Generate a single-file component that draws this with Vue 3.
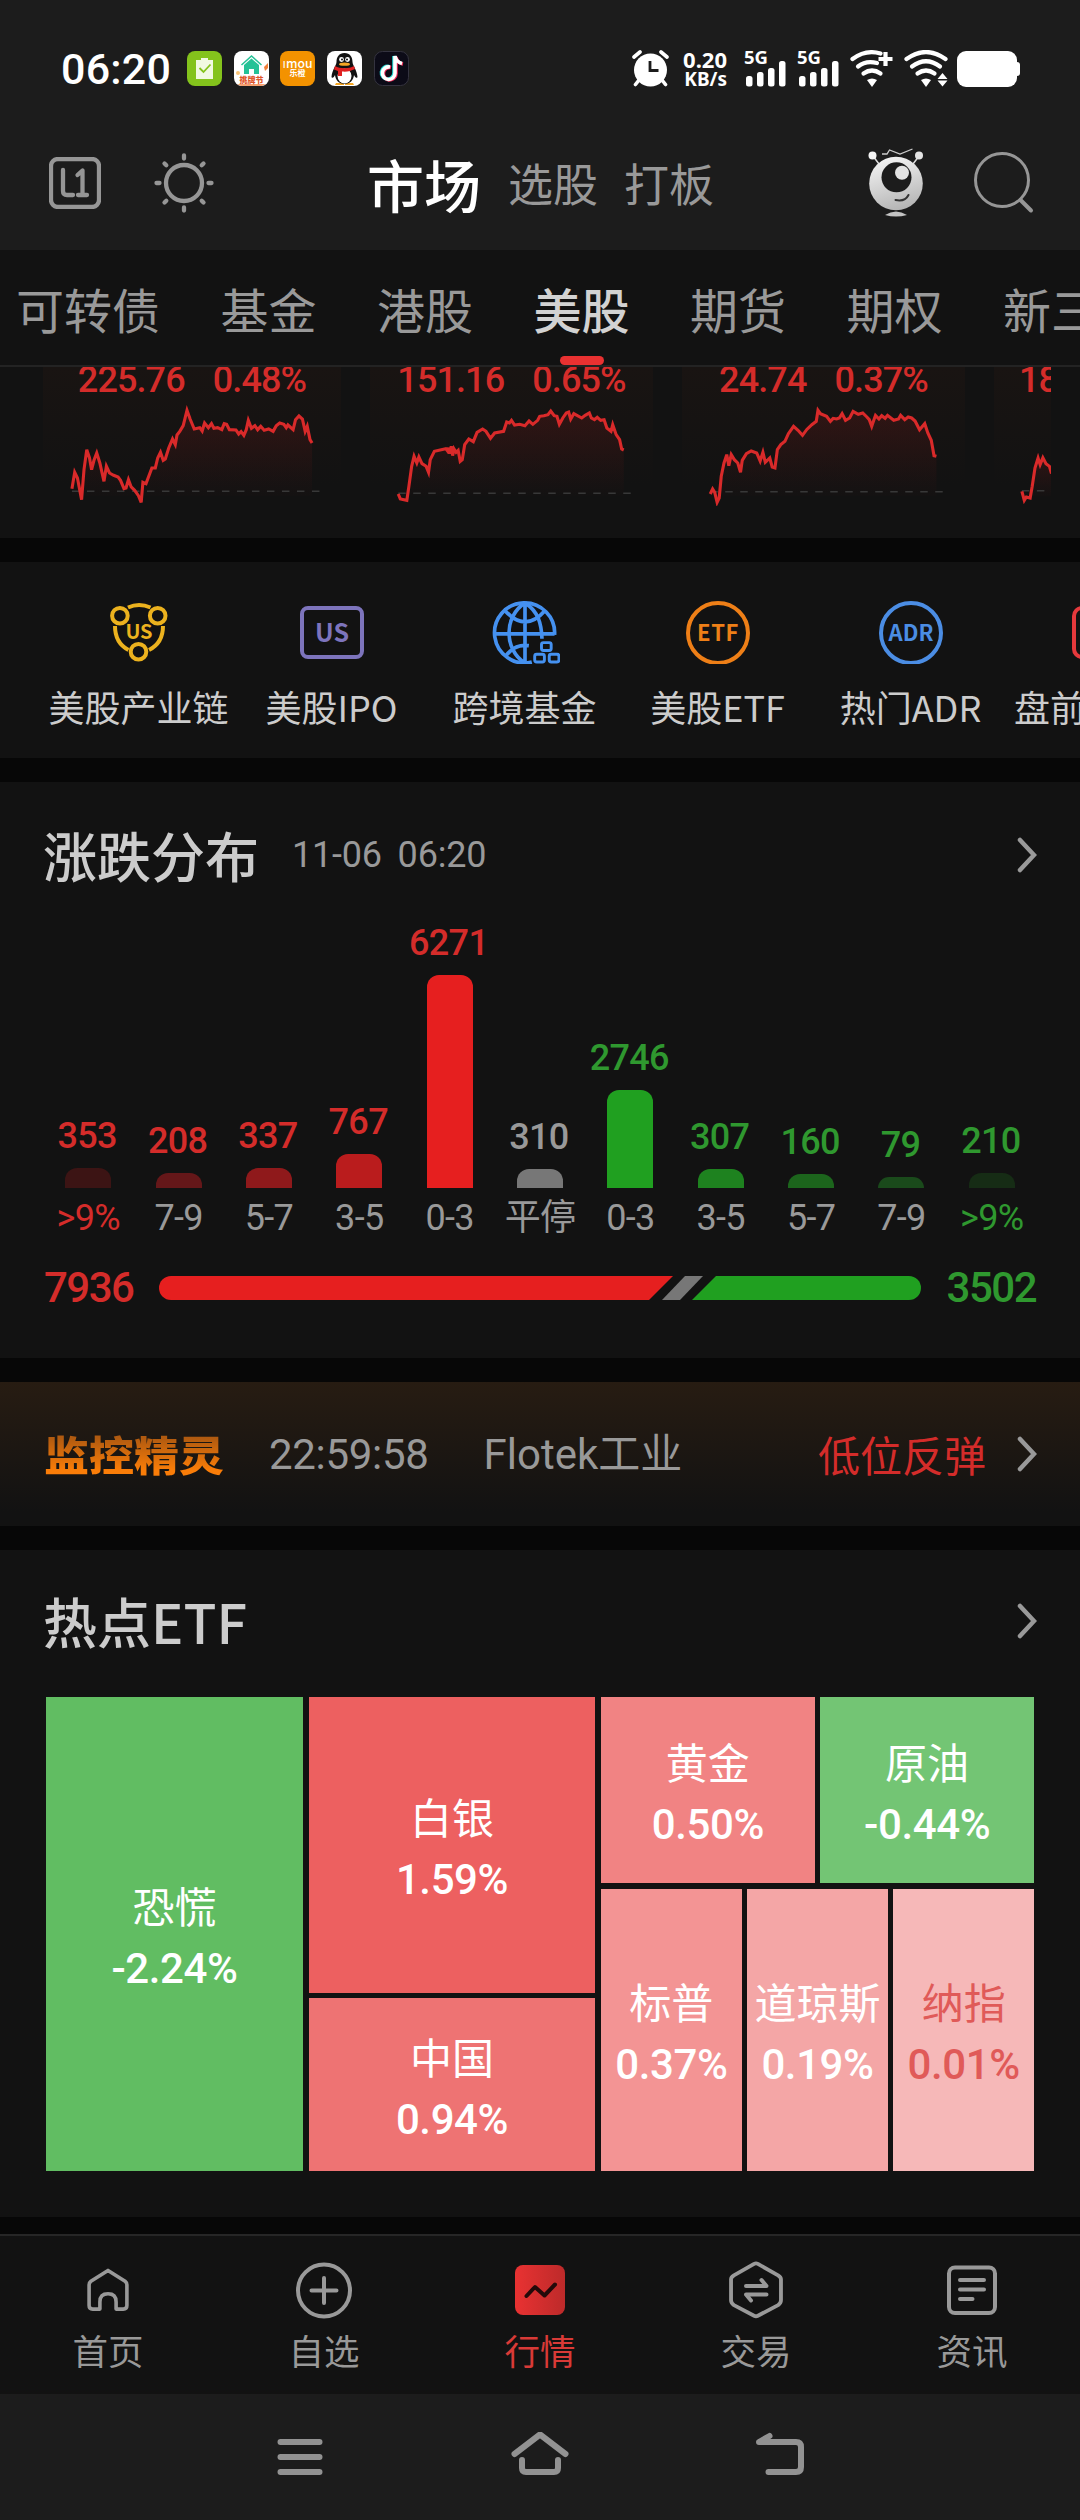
<template>
  <div class="page">
    <!-- Barre d'état du téléphone -->
    <div class="status-bar">
      <span class="clock">06:20</span>
      <div class="notif-icons">
        <svg width="35" height="35" viewBox="0 0 35 35">
          <rect width="35" height="35" rx="8" fill="#84c31c" />
          <path d="M9 9h5V7h7v2h5v19H9z" fill="#f1f9e2" />
          <path d="M12.500 17l4 4 7-7.500" fill="none" stroke="#84c31c" stroke-width="1.800" />
        </svg>
        <svg width="35" height="35" viewBox="0 0 35 35">
          <rect width="35" height="35" rx="8" fill="#fff" />
          <path d="M10 14l7.500-6.500L25 14v9h-5v-5h-5v5h-5z" fill="#25c296" />
          <path d="M7.500 14l10-9 10 9" fill="none" stroke="#25c296" stroke-width="1.500" />
          <path d="M30 16l4-4v5l-3 3z" fill="#f0803a" />
          <circle cx="4" cy="22" r="2" fill="#f9c476" />
          <path d="M3 33h29l-4 2H7z" fill="#f7a070" />
          <text x="17.500" y="32" font-size="8" font-weight="900" fill="#e0562a" text-anchor="middle">挑牌节</text>
        </svg>
        <svg width="35" height="35" viewBox="0 0 35 35">
          <rect width="35" height="35" rx="8" fill="#f39200" />
          <text x="17.500" y="17" font-size="12" font-weight="500" fill="#fff" text-anchor="middle" textLength="30" lengthAdjust="spacingAndGlyphs">ımou</text>
          <text x="17.500" y="25" font-size="8" font-weight="700" fill="#fff" text-anchor="middle">乐橙</text>
        </svg>
        <svg width="35" height="35" viewBox="0 0 35 35">
          <rect width="35" height="35" rx="8" fill="#fff" />
          <path d="M9 32h8v2H8zM18 32h8l1 2h-9z" fill="#f5a623" />
          <path d="M17.500 2c-5.500 0-8 4-8 9 0 3-4.500 8-5 15 1 2 2.500 0 3.500-2 .5 5 4 9 9.500 9s9-4 9.500-9c1 2 2.500 4 3.500 2-.5-7-5-12-5-15 0-5-2.500-9-8-9z" fill="#111" />
          <ellipse cx="17.500" cy="25" rx="7" ry="7.500" fill="#fff" />
          <circle cx="14.500" cy="8.500" r="2.400" fill="#fff" />
          <circle cx="20.500" cy="8.500" r="2.400" fill="#fff" />
          <circle cx="15" cy="8.500" r="1" fill="#111" />
          <circle cx="20" cy="8.500" r="1" fill="#111" />
          <ellipse cx="17.500" cy="13.200" rx="5.500" ry="1.600" fill="#f5a623" />
          <path d="M8 15c5 3 14 3 19 0l1 3c-4 2-8 3-13 2.500V25h-4v-5l-4-1.500z" fill="#e02020" />
        </svg>
        <svg width="35" height="35" viewBox="0 0 35 35">
          <rect x=".5" y=".5" width="34" height="34" rx="8" fill="#0c0b17" stroke="#34333f" />
          <g fill="none" stroke-width="3.600">
            <path d="M15 15.500a6.300 6.300 0 1 0 5 6.200V5c.8 4 3.500 6.500 7 7" stroke="#25d9d5" />
            <path d="M17 16.500a6.300 6.300 0 1 0 5 6.200V6c.8 4 3.500 6.500 7 7" stroke="#f02a58" />
            <path d="M16 16a6.300 6.300 0 1 0 5 6.200V5c.8 4 3.500 6.500 7 7.500" stroke="#fff" />
          </g>
        </svg>
      </div>
      <div class="status-right">
        <svg width="37" height="37" viewBox="0 0 37 37">
          <circle cx="18.500" cy="20" r="16.500" fill="#fff" />
          <path d="M2 7l6-5M35 7l-6-5M7 30l-3.500 4.500M30 30l3.500 4.500" stroke="#fff" stroke-width="3.600" stroke-linecap="round" />
          <path d="M18 11v9.500h8.500" fill="none" stroke="#1c1c1c" stroke-width="2.800" />
        </svg>
        <div class="net-speed">
          <span>0.20</span>
          <span class="unit">KB/s</span>
        </div>
        <svg v-for="n in 2" :key="n" class="signal" width="43" height="37" viewBox="0 0 43 37">
          <text x="0" y="13.500" font-size="17" font-weight="700" fill="#fff" textLength="24" lengthAdjust="spacingAndGlyphs">5G</text>
          <g fill="#fff">
            <rect x="2" y="26" width="6.500" height="10.500" rx="2.500" />
            <rect x="13" y="22" width="6.500" height="14.500" rx="2.500" />
            <rect x="24" y="18" width="6.500" height="18.500" rx="2.500" />
            <rect x="35" y="11" width="6.500" height="25.500" rx="2.500" />
          </g>
        </svg>
        <svg class="wifi-plus" width="44" height="37" viewBox="0 0 44 37">
          <g fill="none" stroke="#fff" stroke-width="4.200" stroke-linecap="round">
            <path d="M2.500 9Q16-1 30.500 3.500" />
            <path d="M8 16.500q8-6.500 19-3.500" />
            <path d="M13.500 23.500q8.500-6 17 0" />
          </g>
          <path d="M17 30q5-3 10 0l-5 7z" fill="#fff" />
          <path d="M35.500 2v14M28.500 9h14" stroke="#fff" stroke-width="4.200" />
        </svg>
        <svg class="wifi" width="44" height="37" viewBox="0 0 44 37">
          <g fill="none" stroke="#fff" stroke-width="4.200" stroke-linecap="round">
            <path d="M2.500 9q19.500-14 39 0" />
            <path d="M8 16.500q14-10.500 28 0" />
            <path d="M13.500 23.500q8.500-6 17 0" />
          </g>
          <path d="M17 30q5-3 10 0l-5 7z" fill="#fff" />
          <path d="M38.500 23l5 6h-10zM38.500 36.500l5-6h-10z" fill="#fff" />
        </svg>
        <svg class="battery" width="63" height="36" viewBox="0 0 63 36">
          <rect width="60" height="36" rx="9" fill="#fff" />
          <rect x="57" y="11" width="6" height="14" rx="3" fill="#fff" />
        </svg>
      </div>
    </div>

    <!-- En-tête -->
    <div class="header">
      <svg class="icon-l1" width="52" height="52" viewBox="0 0 52 52" fill="none" stroke="#969696" stroke-width="4.300" stroke-linecap="round" stroke-linejoin="round">
        <rect x="2" y="2" width="48" height="48" rx="7" />
        <path d="M14 13v21q0 4 4 4h6M28.500 18l5-4.500V38M29 38h9" />
      </svg>
      <svg class="icon-sun" width="60" height="60" viewBox="0 0 60 60" fill="none" stroke="#969696" stroke-width="4.300" stroke-linecap="round">
        <circle cx="30" cy="30" r="18" />
        <path d="M30 2.500v3M30 54.500v3M2.500 30h3M54.500 30h3M10.500 10.500l1.800 1.800M47.700 47.700l1.800 1.800M49.500 10.500l-1.800 1.800M12.300 47.700l-1.800 1.800" />
      </svg>
      <span class="head-tab active">市场</span>
      <span class="head-tab">选股</span>
      <span class="head-tab">打板</span>
      <svg class="icon-robot" width="56" height="69" viewBox="0 0 56 69">
        <defs>
          <linearGradient id="robot" x1="0.300" y1="0" x2="0.600" y2="1">
            <stop offset="0" stop-color="#f4f4f4" />
            <stop offset="1" stop-color="#b4b4b4" />
          </linearGradient>
        </defs>
        <path d="M5 8l6 8M51 8l-6 8" stroke="#ddd" stroke-width="1.500" />
        <circle cx="4.500" cy="7.500" r="4" fill="#f4f4f4" />
        <circle cx="51" cy="7.500" r="4" fill="#e4e4e4" />
        <path d="M14 6h5l2.500-4L32 6l12.500-5" fill="none" stroke="#ccc" stroke-width="1.300" />
        <circle cx="28" cy="35.500" r="26.800" fill="url(#robot)" />
        <circle cx="28.500" cy="29.300" r="15" fill="#1c1c1c" />
        <circle cx="34" cy="24.700" r="7" fill="#e2e2e2" />
        <path d="M27.500 52q9.500 2 13-5" fill="none" stroke="#333" stroke-width="2" stroke-linecap="round" />
        <path d="M17 67q11-7 22 0-11 3-22 0z" fill="#c4c4c4" />
      </svg>
      <svg class="icon-search" width="60" height="62" viewBox="0 0 60 62" fill="none" stroke="#969696" stroke-width="3">
        <circle cx="28" cy="28" r="26.500" />
        <path d="M46.500 48L57 58.500" stroke-width="4" stroke-linecap="round" />
      </svg>
    </div>

    <!-- Onglets des marchés -->
    <div class="tabs">
      <span v-for="tab in tabs" :key="tab" class="tab" :class="{ active: tab === activeTab }">{{ tab }}</span>
    </div>

    <!-- Cartes des indices -->
    <div class="cards">
      <div v-for="card in cards" :key="card.value" class="card" :class="card.size">
        <div class="card-text">
          <span>{{ card.value }}</span>
          <span v-if="card.pct">{{ card.pct }}</span>
        </div>
        <svg class="spark" :viewBox="`${card.x0} 460 ${card.w} 310`" preserveAspectRatio="none">
          <defs>
            <linearGradient :id="'fill' + card.x0" x1="0" y1="0" x2="0" y2="1">
              <stop offset="0" stop-color="#e02020" stop-opacity="0.130" />
              <stop offset="1" stop-color="#e02020" stop-opacity="0" />
            </linearGradient>
          </defs>
          <polygon :points="areaPoints(card)" :fill="`url(#fill${card.x0})`" />
          <path :d="`M${card.from} ${card.base}H${card.to}`" class="base-line" />
          <polyline :points="card.points" class="line" />
        </svg>
      </div>
    </div>

    <!-- Raccourcis -->
    <div class="shortcuts">
      <div class="shortcut">
        <svg width="58" height="64" viewBox="0 -2 58 64" fill="none" stroke="#ecb21e" stroke-width="4">
          <circle cx="9.900" cy="13.700" r="7.800" />
          <circle cx="47.700" cy="13.700" r="7.800" />
          <circle cx="28.500" cy="49.700" r="7.800" />
          <path d="M18 5.500q11-5 22.500 0M5 24q0 17 13.500 24M53 24q0 17-14 24" />
          <text x="29" y="36.500" font-size="20" font-weight="700" fill="#ecb21e" stroke="none" text-anchor="middle">US</text>
        </svg>
        <span>美股产业链</span>
      </div>
      <div class="shortcut">
        <svg width="64" height="64" viewBox="0 -6 64 64" fill="none">
          <rect x="2" y="2" width="60" height="49" rx="6" stroke="#7d74bc" stroke-width="4" />
          <text x="32" y="36" font-size="25" font-weight="700" fill="#7d74bc" text-anchor="middle">US</text>
        </svg>
        <span>美股IPO</span>
      </div>
      <div class="shortcut">
        <svg width="70" height="66" viewBox="-3 -1 70 66" fill="none" stroke="#4591f0" stroke-width="3.800">
          <path d="M39 63A31 31 0 1 1 62.500 35" />
          <path d="M62.500 34H1M32 2v62M32 2C10 16 10 50 32 64M32 2c14 9 17 22 17.500 37M11 9.500q21 24 42 0M12 57q9-13 24-11" />
          <g stroke-width="3">
            <rect x="49" y="43" width="10" height="8" rx="2" />
            <rect x="42" y="55" width="10" height="8" rx="2" />
            <rect x="57" y="55" width="10" height="8" rx="2" />
          </g>
        </svg>
        <span>跨境基金</span>
      </div>
      <div class="shortcut">
        <svg width="64" height="64" viewBox="0 -1 64 64" fill="none">
          <circle cx="32" cy="32" r="30" stroke="#ee7f17" stroke-width="4" />
          <text x="32" y="40" font-size="22" font-weight="700" fill="#ee7f17" text-anchor="middle" letter-spacing=".6">ETF</text>
        </svg>
        <span>美股ETF</span>
      </div>
      <div class="shortcut">
        <svg width="64" height="64" viewBox="0 -1 64 64" fill="none">
          <circle cx="32" cy="32" r="30" stroke="#4b8de4" stroke-width="4" />
          <text x="32" y="40" font-size="22" font-weight="700" fill="#4b8de4" text-anchor="middle">ADR</text>
        </svg>
        <span>热门ADR</span>
      </div>
      <div class="shortcut last">
        <svg width="64" height="64" viewBox="0 -6 64 64" fill="none">
          <rect x="2" y="2" width="60" height="49" rx="8" stroke="#e5393c" stroke-width="4" />
        </svg>
        <span>盘前</span>
      </div>
    </div>

    <!-- Distribution des hausses et baisses -->
    <div class="distribution">
      <div class="section-title">
        <h2>涨跌分布</h2>
        <span class="date">11-06 06:20</span>
        <svg class="chevron" width="20" height="36" viewBox="0 0 20 36"><path d="M3 3l14 15L3 33" /></svg>
      </div>
      <div class="bars">
        <div v-for="(bar, i) in bars" :key="i" class="bar-col" :class="bar.type">
          <span class="bar-value">{{ bar.count }}</span>
          <div class="bar" :style="{ height: bar.height + 'px', backgroundColor: bar.color }"></div>
          <span class="bar-label" :class="{ edge: bar.label === '>9%' }">{{ bar.label }}</span>
        </div>
      </div>
      <div class="totals">
        <span class="total up">7936</span>
        <svg width="762" height="24" viewBox="0 0 762 24">
          <path d="M12 0H514L490 24H12A12 12 0 0 1 12 0z" fill="#e61f1f" />
          <path d="M526 0h18L521 24h-18z" fill="#777" />
          <path d="M557 0H750a12 12 0 0 1 0 24H533z" fill="#20a020" />
        </svg>
        <span class="total down">3502</span>
      </div>
    </div>

    <!-- Alerte -->
    <div class="monitor">
      <span class="monitor-logo">监控精灵</span>
      <span class="monitor-time">22:59:58</span>
      <span class="monitor-name">Flotek工业</span>
      <span class="monitor-event">低位反弹</span>
      <svg class="chevron" width="20" height="36" viewBox="0 0 20 36"><path d="M3 3l14 15L3 33" /></svg>
    </div>

    <!-- ETF populaires -->
    <div class="hot-etf">
      <div class="section-title">
        <h2>热点ETF</h2>
        <svg class="chevron" width="20" height="36" viewBox="0 0 20 36"><path d="M3 3l14 15L3 33" /></svg>
      </div>
      <div class="treemap">
        <div v-for="(col, c) in treemap" :key="c" class="tree-col" :class="'col-' + c">
          <div v-for="(row, r) in col" :key="r" class="tree-row" :style="{ height: row.height + 'px' }">
            <div v-for="etf in row.cells" :key="etf.name" class="cell" :class="etf.area">
              <span class="cell-name">{{ etf.name }}</span>
              <span class="cell-pct">{{ etf.pct }}</span>
            </div>
          </div>
        </div>
      </div>
    </div>

    <!-- Navigation -->
    <div class="nav">
      <div class="nav-item">
        <svg width="60" height="60" viewBox="0 0 60 60" class="nav-icon">
          <path d="M13 51q-4 0-4-4V24q0-2.500 2-4L30 8l19 12q2 1.500 2 4v23q0 4-4 4h-8v-8q0-9-9-9t-9 9v8z" transform="translate(3 3.200) scale(.9)" />
        </svg>
        <span>首页</span>
      </div>
      <div class="nav-item">
        <svg width="60" height="60" viewBox="0 0 60 60" class="nav-icon">
          <circle cx="30" cy="30.500" r="26" />
          <path d="M30 18v25M17.500 30.500h25" />
        </svg>
        <span>自选</span>
      </div>
      <div class="nav-item active">
        <svg width="60" height="60" viewBox="0 0 60 60">
          <defs>
            <linearGradient id="quote">
              <stop offset="0" stop-color="#e93232" />
              <stop offset="1" stop-color="#bd2a2a" />
            </linearGradient>
          </defs>
          <rect x="5" y="5" width="50" height="50" rx="8" fill="url(#quote)" />
          <path d="M16.500 36L25 27l9.500 8.500L45 24.500" fill="none" stroke="#240a0a" stroke-width="4" stroke-linecap="round" stroke-linejoin="round" />
        </svg>
        <span>行情</span>
      </div>
      <div class="nav-item">
        <svg width="60" height="60" viewBox="0 0 60 60" class="nav-icon">
          <path d="M28 3q2-1 4 0l21 12q3 2 3 4v22q0 3-3 5L32 57q-2 1-4 0L7 46q-3-2-3-5V19q0-2 3-4z" transform="translate(1.200 1) scale(.96)" />
          <path d="M20 26h20.500L35.500 20M40.500 34.500H20L25 40.500" />
        </svg>
        <span>交易</span>
      </div>
      <div class="nav-item">
        <svg width="60" height="60" viewBox="0 0 60 60" class="nav-icon">
          <rect x="7" y="7.500" width="46" height="45.500" rx="6" />
          <path d="M18 20h24M18 29.500h24M18 39h12.500" />
        </svg>
        <span>资讯</span>
      </div>
    </div>

    <!-- Boutons système -->
    <div class="system-nav">
      <svg width="60" height="50" viewBox="0 0 60 50"><path d="M10.500 10h39M10.500 25h39M10.500 40h39" /></svg>
      <svg width="60" height="50" viewBox="0 0 60 50"><path d="M4.500 22L30 2.500 55.500 22M12 28v8q0 4 4 4h28q4 0 4-4v-8" /></svg>
      <svg width="60" height="50" viewBox="0 0 60 50"><path d="M18.500 40H46q5 0 5-5V15q0-5-5-5H9L19.500 4" /></svg>
    </div>
  </div>
</template>

<script setup>
import { ref } from 'vue'

const tabs = ['可转债', '基金', '港股', '美股', '期货', '期权', '新三板']
const activeTab = ref('美股')

// Courbes des indices
const cards = [
  {
    value: '225.76', pct: '0.48%', size: 'wide', x0: 125, w: 865, base: 725, from: 209, to: 930,
    points: '209,717 217,668 225,685 237,750 244,660 252,600 260,625 266,660 273,632 281,610 290,640 302,695 309,650 318,670 330,677 343,682 350,692 360,717 366,715 373,690 381,712 391,722 402,738 410,758 415,698 424,702 441,655 451,655 458,625 466,608 474,632 480,628 490,595 501,568 509,585 514,556 522,545 532,528 543,482 552,508 564,538 580,534 587,544 594,520 605,534 614,522 621,536 632,534 644,540 651,522 658,524 666,540 685,541 693,553 700,546 708,557 715,540 721,512 730,536 740,528 748,540 757,530 767,542 780,538 793,545 802,528 812,520 824,524 831,534 836,526 851,540 858,510 868,499 878,508 886,545 892,530 900,570 906,580'
  },
  {
    value: '151.16', pct: '0.65%', size: '', x0: 1075, w: 822, base: 731, from: 1157, to: 1834,
    points: '1157,733 1163,748 1182,752 1188,710 1196,650 1203,620 1211,640 1217,622 1226,642 1238,650 1245,668 1250,630 1262,605 1295,597 1300,604 1303,594 1306,612 1311,590 1315,618 1319,598 1325,608 1331,602 1337,635 1343,630 1350,585 1362,568 1375,576 1386,548 1402,538 1412,545 1425,566 1437,550 1463,545 1472,517 1480,520 1486,512 1495,526 1510,524 1525,528 1537,514 1548,524 1562,512 1568,500 1580,498 1592,495 1600,484 1610,498 1618,500 1625,524 1635,505 1645,490 1652,487 1658,508 1667,492 1690,505 1700,497 1712,490 1718,505 1727,510 1735,503 1745,512 1755,510 1763,535 1775,545 1780,525 1790,555 1800,570 1806,598 1812,601'
  },
  {
    value: '24.74', pct: '0.37%', size: '', x0: 413, w: 822, base: 726, from: 495, to: 1172,
    points: '495,733 502,718 508,728 515,758 521,745 527,680 535,640 543,615 549,648 556,615 565,630 575,640 583,668 588,632 600,612 614,604 630,610 640,634 648,608 655,638 668,625 675,652 683,655 690,600 700,585 712,575 722,552 737,530 750,542 763,557 775,540 790,525 803,515 808,482 815,492 833,500 844,515 852,506 862,508 870,505 878,492 888,512 900,505 910,485 925,494 938,490 950,502 957,510 964,530 975,497 985,508 993,498 1003,506 1010,497 1028,512 1042,508 1048,497 1060,510 1070,502 1080,505 1090,514 1103,540 1118,522 1127,550 1137,572 1145,618 1152,620'
  },
  {
    value: '18', pct: '', size: 'cut', x0: 1319, w: 822, base: 723, from: 1400, to: 1490,
    points: '1400,725 1407,752 1413,742 1424,745 1430,710 1438,655 1447,625 1453,645 1461,624 1470,642 1480,650 1486,672'
  }
]

const bars = [
  { count: 353, label: '>9%', height: 20, color: '#3c1414', type: 'up' },
  { count: 208, label: '7-9', height: 15, color: '#651719', type: 'up' },
  { count: 337, label: '5-7', height: 20, color: '#8f191b', type: 'up' },
  { count: 767, label: '3-5', height: 34, color: '#ba1c1d', type: 'up' },
  { count: 6271, label: '0-3', height: 213, color: '#e61f1f', type: 'up' },
  { count: 310, label: '平停', height: 19, color: '#777777', type: 'flat' },
  { count: 2746, label: '0-3', height: 98, color: '#20a020', type: 'down' },
  { count: 307, label: '3-5', height: 19, color: '#1e821f', type: 'down' },
  { count: 160, label: '5-7', height: 14, color: '#1c651c', type: 'down' },
  { count: 79, label: '7-9', height: 11, color: '#1a4a1b', type: 'down' },
  { count: 210, label: '>9%', height: 15, color: '#162c15', type: 'down' }
]

// Colonnes de la carte, chacune découpée en lignes
const treemap = [
  [{ height: 474, cells: [{ name: '恐慌', pct: '-2.24%', area: 'vix' }] }],
  [
    { height: 296, cells: [{ name: '白银', pct: '1.59%', area: 'silver' }] },
    { height: 173, cells: [{ name: '中国', pct: '0.94%', area: 'china' }] }
  ],
  [
    {
      height: 186,
      cells: [
        { name: '黄金', pct: '0.50%', area: 'gold' },
        { name: '原油', pct: '-0.44%', area: 'oil' }
      ]
    },
    {
      height: 282,
      cells: [
        { name: '标普', pct: '0.37%', area: 'sp' },
        { name: '道琼斯', pct: '0.19%', area: 'dow' },
        { name: '纳指', pct: '0.01%', area: 'nasdaq' }
      ]
    }
  ]
]

// Ferme la courbe vers le bas pour le remplissage
function areaPoints(card) {
  const list = card.points.split(' ')
  const first = list[0].split(',')[0]
  const last = list[list.length - 1].split(',')[0]
  return `${first},740 ${card.points} ${last},740`
}
</script>

<style>
body {
  margin: 0;
  background: #070707;
}
</style>

<style scoped>
.page {
  width: 1080px;
  height: 2520px;
  overflow: hidden;
  background: #070707;
  color: #999;
  font-family: "Noto Sans CJK SC", sans-serif;
}

.page * {
  box-sizing: border-box;
}

svg {
  display: block;
  flex: none;
}

/* Barre d'état */
.status-bar {
  display: flex;
  align-items: center;
  height: 137px;
  padding: 0 60px 0 61px;
  background: #1c1c1c;
  color: #fff;
}

.clock {
  width: 126px;
  font: 500 43px/50px Roboto, sans-serif;
  letter-spacing: 0.2px;
}

.notif-icons {
  display: flex;
  gap: 11.7px;
}

.status-right {
  display: flex;
  align-items: center;
  margin-left: auto;
}

.net-speed {
  display: flex;
  flex-direction: column;
  align-items: flex-end;
  width: 58px;
  margin-right: 17px;
  font: 700 22px/20px "Noto Sans", sans-serif;
}

.net-speed .unit {
  font-size: 19px;
}

.signal {
  margin-right: 10px;
  overflow: visible;
  font-family: "Noto Sans", sans-serif;
}

.wifi {
  margin: 0 9px 0 10px;
}

/* En-tête */
.header {
  display: flex;
  align-items: center;
  height: 113px;
  padding: 0 46px 22px 49px;
  background: #1c1c1c;
}

.icon-sun {
  margin: 0 153px 0 53px;
}

.head-tab {
  margin-right: 26px;
  font-size: 45px;
  line-height: 60px;
}

.head-tab.active {
  margin-right: 27px;
  color: #fff;
  font-size: 57px;
  font-weight: 500;
}

.icon-robot {
  margin: 0 50px 0 auto;
}

/* Onglets */
.tabs {
  display: flex;
  gap: 60.5px;
  height: 117px;
  padding-left: 16px;
  overflow: hidden;
  border-bottom: 2px solid #232323;
  background: #121212;
}

.tab {
  display: flex;
  flex: none;
  flex-direction: column;
  align-items: center;
  padding-top: 5px;
  font-size: 48px;
  line-height: 106px;
}

.tab.active {
  color: #d2d2d2;
  font-weight: 500;
}

.tab.active::after {
  content: "";
  width: 44px;
  height: 9px;
  margin-top: -5px;
  border-radius: 5px;
  background: #e93131;
}

/* Cartes */
.cards {
  display: flex;
  gap: 29px;
  height: 171px;
  padding-left: 43px;
  border-right: 29px solid #121212;
  overflow: hidden;
  background: #121212;
}

.card {
  flex: none;
  width: 283px;
  height: 140px;
  overflow: hidden;
  background: linear-gradient(#191412, #121212 85%);
}

.card.wide {
  width: 298px;
}

.card-text {
  display: flex;
  justify-content: center;
  gap: 28px;
  margin-top: -8px;
  color: #d42c2a;
  font: 500 36px/42px Roboto, sans-serif;
  letter-spacing: -0.9px;
}

.card.cut .card-text {
  justify-content: flex-start;
  padding-left: 25px;
}

.spark {
  width: 100%;
  height: 103.3px;
  margin-top: 2px;
}

.spark .line {
  fill: none;
  stroke: #d92a2a;
  stroke-width: 3.1px;
  vector-effect: non-scaling-stroke;
}

.spark .base-line {
  fill: none;
  stroke: #383838;
  stroke-width: 1.5px;
  stroke-dasharray: 7.5 7.5;
  vector-effect: non-scaling-stroke;
}

/* Raccourcis */
.shortcuts {
  display: flex;
  height: 196px;
  margin-top: 24px;
  padding-left: 42px;
  overflow: hidden;
  background: #121212;
}

.shortcut {
  display: flex;
  flex: none;
  flex-direction: column;
  align-items: center;
  justify-content: space-between;
  width: 193px;
  padding: 38px 0 27px;
  color: #ccc;
  font-size: 36px;
  line-height: 50px;
}

.shortcut svg {
  height: 64px;
}

.shortcut.last {
  align-items: flex-start;
  padding-left: 7px;
}

.shortcut.last svg {
  margin-left: 58px;
}

/* Titres de section */
.section-title {
  display: flex;
  align-items: center;
  padding: 0 43px;
}

.section-title h2 {
  margin: 0;
  color: #ccc;
  font-size: 54px;
  font-weight: 500;
  line-height: 70px;
}

.date {
  margin-left: 33px;
  font: 400 36px/42px Roboto, sans-serif;
  letter-spacing: -0.2px;
  word-spacing: 7px;
}

.chevron {
  margin-left: auto;
  fill: none;
  stroke: #999;
  stroke-width: 4.5;
  stroke-linecap: round;
}

/* Distribution */
.distribution {
  height: 576px;
  margin-top: 24px;
  padding-top: 38px;
  background: #121212;
}

.bars {
  display: flex;
  height: 349px;
  padding: 0 43px;
}

.bar-col {
  display: flex;
  flex: 1;
  flex-direction: column;
  align-items: center;
  justify-content: flex-end;
  font: 500 36px/42px Roboto, "Noto Sans CJK SC", sans-serif;
  letter-spacing: -0.7px;
}

.bar-value {
  margin: 0 2px 11px 0;
}

.bar {
  flex: none;
  width: 46px;
  border-radius: 12px 12px 0 0;
}

.bar-label {
  height: 42px;
  margin-top: 9px;
  color: #999;
  font-weight: 400;
  white-space: nowrap;
}

.up .bar-value,
.up .edge,
.total.up {
  color: #d42c2a;
}

.down .bar-value,
.down .edge,
.total.down {
  color: #2f982f;
}

.totals {
  display: flex;
  align-items: center;
  justify-content: space-between;
  margin-top: 24px;
  padding: 0 44px;
  font: 500 42px/50px Roboto, sans-serif;
  letter-spacing: -1.5px;
}

/* Alerte */
.monitor {
  display: flex;
  align-items: center;
  height: 144px;
  margin-top: 24px;
  padding: 0 43px 0 44px;
  background: linear-gradient(#271c12, #121212 90%);
  font-size: 42px;
  line-height: 60px;
}

.monitor-logo {
  width: 181px;
  background: linear-gradient(#b05a10 20%, #fa7d08 80%);
  background-clip: text;
  -webkit-background-clip: text;
  color: transparent;
  font-size: 45px;
  font-weight: 900;
  transform: scaleY(0.9);
}

.monitor-time {
  margin: 2px 55px 0 44px;
  font-family: Roboto, sans-serif;
  letter-spacing: -0.3px;
}

.monitor-name {
  margin-top: 2px;
  font-family: Roboto, "Noto Sans CJK SC", sans-serif;
}

.monitor-event {
  margin-left: auto;
  color: #d42c2a;
}

.monitor .chevron {
  margin-left: 31px;
}

/* ETF */
.hot-etf {
  height: 667px;
  margin-top: 24px;
  padding-top: 36px;
  background: #121212;
}

.treemap {
  display: flex;
  gap: 6px;
  margin: 41px 46px 0;
}

.tree-col {
  display: flex;
  flex: none;
  flex-direction: column;
  justify-content: space-between;
  width: 433px;
  height: 474px;
}

.tree-col.col-0 {
  width: 257px;
}

.tree-col.col-1 {
  width: 286px;
}

.tree-row {
  display: flex;
  gap: 5.5px;
}

.cell {
  display: flex;
  flex: 1 1 0;
  flex-direction: column;
  align-items: center;
  justify-content: center;
  min-width: 0;
  padding-top: 6px;
  color: #fff;
  font-size: 42px;
  line-height: 64px;
  white-space: nowrap;
}

.cell-pct {
  font-weight: 500;
  font-family: Roboto, sans-serif;
  letter-spacing: -0.4px;
}

.vix {
  background: #61bd62;
}

.silver {
  background: #ed6060;
}

.china {
  background: #ee7373;
}

.gold {
  background: #f18383;
}

.oil {
  background: #73c574;
}

.sp {
  background: #f39494;
}

.dow {
  background: #f4a6a6;
}

.nasdaq {
  background: #f6b8b8;
  color: #e05a58;
}

/* Navigation */
.nav {
  display: flex;
  height: 160px;
  margin-top: 17px;
  border-top: 2px solid #262626;
  background: #121212;
}

.nav-item {
  display: flex;
  flex: 1;
  flex-direction: column;
  align-items: center;
  padding-top: 24px;
  font-size: 35.5px;
  line-height: 50px;
}

.nav-item span {
  margin-top: 5px;
}

.nav-item.active {
  color: #d93a37;
}

.nav-icon {
  fill: none;
  stroke: #999;
  stroke-width: 4;
  stroke-linecap: round;
  stroke-linejoin: round;
}

/* Boutons système */
.system-nav {
  display: flex;
  justify-content: space-around;
  height: 126px;
  padding: 38px 180px 0;
  background: #1c1c1c;
}

.system-nav svg {
  fill: none;
  stroke: #929292;
  stroke-width: 6;
  stroke-linecap: round;
  stroke-linejoin: round;
}
</style>
